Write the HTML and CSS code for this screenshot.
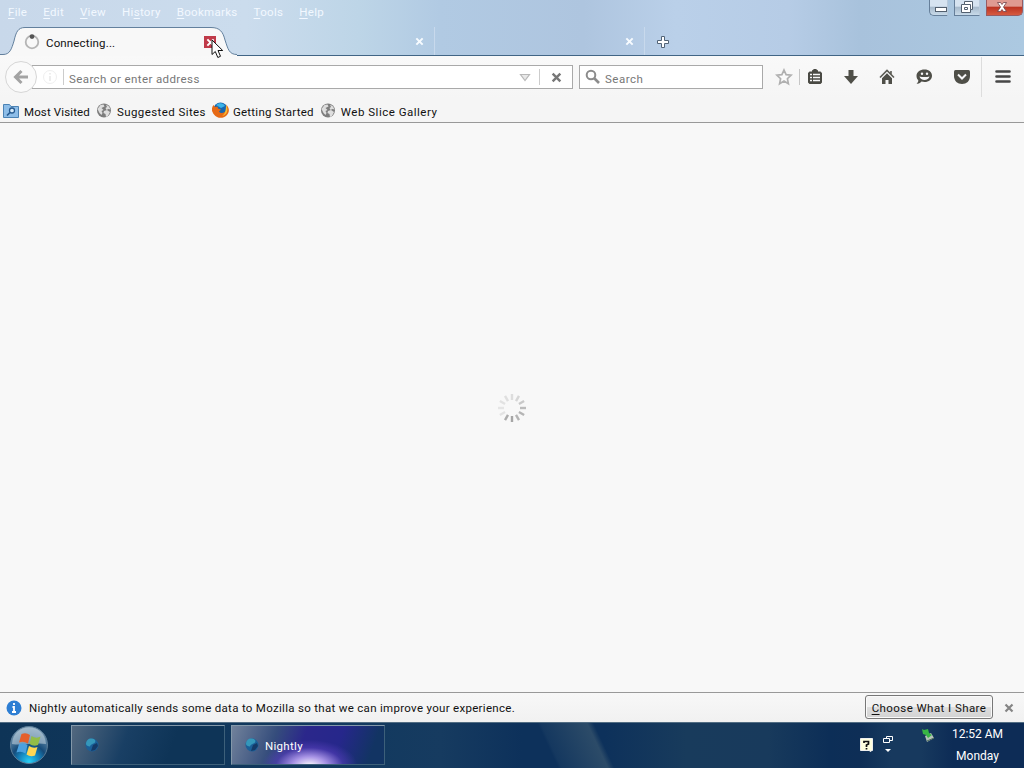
FILE: index.html
```html
<!DOCTYPE html>
<html lang="en">
<head>
    <meta charset="utf-8">
    <title>Nightly</title>
    <link rel="stylesheet" href="styles.css">
</head>
<body>
    <!-- Shared shapes -->
    <svg class="defs" width="0" height="0">
        <defs>
            <symbol id="globe" viewBox="0 0 16 16">
                <circle cx="8" cy="7.500" r="7" fill="#7d7d7d"/>
                <path d="M1.500 6l3-4 3-.5 1 2-3 1.500 2 2-2 1 1 2-1 2-2-2zM10 1.500l3 2 1.500 3-2-.5-2 1-1-2 1.500-1zM8 8l3-1 3 2-2 4-2 1-.5-3-2-1z" fill="#dedede"/>
            </symbol>
            <symbol id="cross" viewBox="0 0 10 10">
                <path d="M1.500 1.500l7 7M8.500 1.500l-7 7" stroke="currentColor" stroke-width="2.200"/>
            </symbol>
            <symbol id="orb" viewBox="0 0 16 16">
                <circle cx="8" cy="8" r="6.500" fill="#1b5f97"/>
                <path d="M2 7c0-4 3-6 6-5.500 3 .5 4 2 3 4-2 2-4 1-5 4-2 0-4-1-4-2.500z" fill="#3597ba"/>
                <path d="M9 8l4-2 1 3-3 4-4 1z" fill="#143a68"/>
            </symbol>
        </defs>
    </svg>

    <div class="titlebar">
        <div class="menubar">
            <span><u>F</u>ile</span>
            <span><u>E</u>dit</span>
            <span><u>V</u>iew</span>
            <span>Hi<u>s</u>tory</span>
            <span><u>B</u>ookmarks</span>
            <span><u>T</u>ools</span>
            <span><u>H</u>elp</span>
        </div>
        <div class="window-buttons">
            <div class="win-btn minimize">
                <svg width="20" height="16" viewBox="0 0 20 16"><rect x="6.500" y="7.500" width="11" height="4" fill="#fff" stroke="#53606f"/></svg>
            </div>
            <div class="win-btn restore">
                <svg width="26" height="16" viewBox="0 0 26 16"><path d="M10.500 1.500h8v8h-2v3h-9v-8h3z" fill="#fff" stroke="#53606f"/><path d="M10.500 4.500h6v5M10.500 7.500h3v2h-3z" fill="none" stroke="#53606f"/></svg>
            </div>
            <div class="win-btn close">
                <svg width="32" height="16" viewBox="0 0 32 16"><path d="M11.500 2.500h3l1.500 2 1.500-2h3l-3 4.500 3 4.500h-3l-1.500-2-1.500 2h-3l3-4.500z" fill="#fff" stroke="#704046" stroke-width=".8"/></svg>
            </div>
        </div>
        <div class="tabs">
            <div class="tab active">
                <svg class="tab-shape" width="237" height="29" viewBox="0 0 237 29">
                    <path d="M0 27.500H3C10 27.500 11.500 22 14 14C16 5 18 .5 25 .5H211C220 .5 223 5 225 13C228 22 229 27.500 237 27.500V29H0z" fill="#f8f8f8"/>
                    <path d="M0 27.500H3C10 27.500 11.500 22 14 14C16 5 18 .5 25 .5H211C220 .5 223 5 225 13C228 22 229 27.500 237 27.500" fill="none" stroke="#63809d"/>
                </svg>
                <svg class="throbber" width="16" height="16" viewBox="0 0 16 16"><circle cx="8" cy="8" r="6.300" fill="none" stroke="#b5b5b5" stroke-width="1.800"/><circle cx="8" cy="2.600" r="2.400" fill="#555"/></svg>
                <span class="tab-label">Connecting...</span>
                <span class="tab-close-hot"><svg width="9" height="9"><use href="#cross"/></svg></span>
            </div>
            <div class="tab second"><svg width="9" height="9"><use href="#cross"/></svg></div>
            <div class="tab third"><svg width="9" height="9"><use href="#cross"/></svg></div>
            <svg class="new-tab" width="14" height="14" viewBox="0 0 14 14"><path d="M5.500 1.500h3v4h4v3h-4v4h-3v-4h-4v-3h4z" fill="#fff" stroke="#526477"/></svg>
        </div>
    </div>

    <div class="navbar">
        <div class="back">
            <svg width="16" height="16" viewBox="0 0 16 16"><path d="M8.500 2L2.500 8l6 6M3 8h12" fill="none" stroke="#a3a3a3" stroke-width="3"/></svg>
        </div>
        <div class="urlbar">
            <svg class="identity" width="16" height="16" viewBox="0 0 16 16"><circle cx="8" cy="8" r="6.500" fill="none" stroke="#efefef"/><path d="M8 4v1.500M8 7v5" stroke="#e8e8e8" stroke-width="1.500"/></svg>
            <span class="url-text">Search or enter address</span>
            <svg class="dropmarker" width="12" height="9" viewBox="0 0 12 9"><path d="M1.500 1.500h9L6 7.500z" fill="#e8e8e8" stroke="#b8b8b8" stroke-width="1.200"/></svg>
            <span class="stop"><svg width="11" height="11"><use href="#cross"/></svg></span>
        </div>
        <div class="searchbar">
            <svg width="16" height="16" viewBox="0 0 16 16"><circle cx="6" cy="6" r="4.300" fill="none" stroke="#8c8c8c" stroke-width="2"/><path d="M9 9l5 5" stroke="#8c8c8c" stroke-width="2.600"/></svg>
            <span>Search</span>
        </div>
        <div class="toolbar">
            <svg class="star" width="18" height="18" viewBox="0 0 18 18"><path d="M9 2l2.100 4.700 5 .5-3.700 3.500 1 5L9 13.100l-4.400 2.600 1-5L1.900 7.200l5-.5z" fill="#fafafa" stroke="#b0b0b0" stroke-width="1.700"/></svg>
            <i class="line"></i>
            <svg width="16" height="16" viewBox="0 0 16 16"><path d="M5 2.500V1.500L7 0h2l2 1.500v1h2.500L15 4v9.500L13.500 15h-11L1 13.500V4l1.500-1.500z" fill="#4a4a44"/><path d="M3 5.500h2M6 5.500h7M3 8.500h2M6 8.500h7M3 11.500h2M6 11.500h7" stroke="#f8f8f8" stroke-width="1.600"/></svg>
            <svg width="16" height="16" viewBox="0 0 16 16"><path d="M5.500 1h5v6H15l-7 8-7-8h4.500z" fill="#4f4f48"/></svg>
            <svg width="16" height="16" viewBox="0 0 16 16"><path d="M1 8.500l7-7 7 7M12 2v4" fill="none" stroke="#5c5c55" stroke-width="1.600"/><path d="M8 4.200l5 5V15H9.500v-4h-3v4H3V9.200z" fill="#4f4f48"/></svg>
            <svg width="18" height="16" viewBox="0 0 18 16"><path d="M9.500 .5c4.500 0 7.500 2.600 7.500 6.200s-3 6.300-7.500 6.300c-1 0-2-.1-3-.4C5.500 14 3.500 15 1.500 14.500 3 13.700 3.500 12.500 3.200 11 2 10 1.500 8.500 1.500 6.700 1.500 3.100 5 .5 9.500.5z" fill="#4f4f48"/><circle cx="7" cy="4.700" r="1.200" fill="#f8f8f8"/><circle cx="12" cy="4.700" r="1.200" fill="#f8f8f8"/><path d="M4.500 7.500c3 .8 7 .8 10 0-.8 4.500-9.200 4.500-10 0z" fill="#f8f8f8"/></svg>
            <svg width="18" height="16" viewBox="0 0 18 16"><path d="M2.500 1h13Q17 1 17 2.500V7c0 5-3.500 8-8 8s-8-3-8-8V2.500Q1 1 2.500 1z" fill="#4f4f48"/><path d="M5 5.500l4 4 4-4" fill="none" stroke="#f8f8f8" stroke-width="2"/></svg>
            <div class="menu-btn"><svg width="18" height="16" viewBox="0 0 18 16"><path d="M2.500 2.500h13M2.500 7.500h13M2.500 12.500h13" stroke="#474747" stroke-width="2.600" stroke-linecap="round"/></svg></div>
        </div>
    </div>

    <div class="bookmarks">
        <svg width="16" height="16" viewBox="0 0 16 16"><path d="M.5 14.500v-13h6l1.500 2h7.500v11z" fill="#8dbde8" stroke="#4b82b4"/><circle cx="9" cy="7.500" r="2.500" fill="#d6ebfb" stroke="#275b91" stroke-width="1.300"/><path d="M7 9.500l-3 3" stroke="#275b91" stroke-width="1.700"/></svg>
        <span class="most">Most Visited</span>
        <svg width="16" height="16"><use href="#globe"/></svg>
        <span class="suggested">Suggested Sites</span>
        <svg width="17" height="17" viewBox="0 0 17 17"><circle cx="8.500" cy="7.500" r="7" fill="#1866ae"/><path d="M4 3c3-3 8-2 9 1L9 6z" fill="#3bb4e8"/><path d="M1.500 3l1.500 2 2.500-.5.5 2 3 1-2 2c2 3 6 1 7-1s1-4 0-6c3.500 3 4 7.500.5 11S5 16.500 2 12.500-.5 6 1.500 3z" fill="#e66a16"/><path d="M14 3c3 5 1 10-4 11 3-2 4-5 4-11z" fill="#f7bd35"/></svg>
        <span class="getting">Getting Started</span>
        <svg width="16" height="16"><use href="#globe"/></svg>
        <span class="gallery">Web Slice Gallery</span>
    </div>

    <div class="content">
        <svg width="30" height="30" viewBox="-15 -15 30 30" stroke-width="2.400">
            <path d="M0-8v-6" stroke="#ddd"/>
            <path d="M0-8v-6" stroke="#d6d6d6" transform="rotate(30)"/>
            <path d="M0-8v-6" stroke="#c9c9c9" transform="rotate(60)"/>
            <path d="M0-8v-6" stroke="#bcbcbc" transform="rotate(90)"/>
            <path d="M0-8v-6" stroke="#b5b5b5" transform="rotate(120)"/>
            <path d="M0-8v-6" stroke="#b5b5b5" transform="rotate(150)"/>
            <path d="M0-8v-6" stroke="#a6a6a6" transform="rotate(180)"/>
            <path d="M0-8v-6" stroke="#acacac" transform="rotate(210)"/>
            <path d="M0-8v-6" stroke="#e3e3e3" transform="rotate(240)"/>
            <path d="M0-8v-6" stroke="#e5e5e5" transform="rotate(270)"/>
            <path d="M0-8v-6" stroke="#e2e2e2" transform="rotate(300)"/>
            <path d="M0-8v-6" stroke="#dfdfdf" transform="rotate(330)"/>
        </svg>
    </div>

    <div class="notification">
        <svg width="16" height="16" viewBox="0 0 16 16"><circle cx="8" cy="8" r="7.500" fill="#2d7ed3"/><path d="M8 3v2M6.500 7H8v5M6 12h4" fill="none" stroke="#fff" stroke-width="1.800"/></svg>
        <span class="message">Nightly automatically sends some data to Mozilla so that we can improve your experience.</span>
        <button class="share-btn"><u>C</u>hoose What I Share</button>
        <svg class="dismiss" width="10" height="10"><use href="#cross"/></svg>
    </div>

    <div class="taskbar">
        <svg class="start" width="40" height="40" viewBox="0 0 40 40">
            <defs>
                <radialGradient id="start-bg" cx=".5" cy=".95" r=".95"><stop offset="0" stop-color="#29d0f5"/><stop offset=".3" stop-color="#1482bb"/><stop offset=".5" stop-color="#164b79"/><stop offset="1" stop-color="#8baac0"/></radialGradient>
            </defs>
            <circle cx="20" cy="20" r="18.500" fill="url(#start-bg)" stroke="#5b7d98"/>
            <path d="M3 19C4-3 36-3 37 19 27 17 14 21 3 19z" fill="#b9cbd8" opacity=".6"/>
            <path d="M12.500 9q4.500-2 8.500 1l-2 8.500q-4.500-3-9-1z" fill="#e45f2c"/>
            <path d="M22.500 11q5 3 9 .5L29 20q-4.500 2-8.500-1z" fill="#93bd47"/>
            <path d="M10 19q4.500-2 8.500 1l-2 8.500q-4.500-3-9-1z" fill="#4ba1e0"/>
            <path d="M20 21q4.500 3 8.500 1L26 30.500q-4.500 2-8.500-1z" fill="#ffd653"/>
        </svg>
        <div class="task"><svg width="16" height="16"><use href="#orb"/></svg></div>
        <div class="task current"><svg width="16" height="16"><use href="#orb"/></svg><span>Nightly</span></div>
        <div class="tray">
            <svg class="help" width="13" height="14" viewBox="0 0 13 14"><path d="M.5.5h12v12H11v1l-2-1H.5z" fill="#ffffdf" stroke="#eee"/><path d="M4 5V3.500h4.500V6L6.500 7v2M6.500 10v1.500" fill="none" stroke="#111" stroke-width="1.700"/></svg>
            <svg class="lang" width="10" height="18" viewBox="0 0 10 18"><path d="M3.500 3.500v-2h6v4h-3M.5 3.500h6v4h-6z" fill="none" stroke="#fff"/><path d="M2 14h6l-3 3z" fill="#fff"/></svg>
            <svg class="device" width="14" height="14" viewBox="0 0 14 14"><path d="M4 8l6-3 3 5-7 4z" fill="#b5c3b7"/><path d="M1 1l2 1 4-1 1 4 3 2-4 3-2-3-3-1z" fill="#38b545"/><path d="M6 13l7-3" stroke="#4e6c5c"/></svg>
            <div class="clock"><span class="time">12:52 AM</span><span class="day">Monday</span></div>
        </div>
    </div>

    <svg class="cursor" width="13" height="20" viewBox="0 0 13 20"><path d="M1 1v14.500l3.300-3 2.500 6 2.700-1.200L7 11.500h4.700z" fill="#fff" stroke="#111"/></svg>
</body>
</html>
```
FILE: styles.css
```css
* {
    box-sizing: border-box;
}
body {
    margin: 0;
    width: 1024px;
    height: 768px;
    overflow: hidden;
    display: flex;
    flex-direction: column;
    background: #f8f8f8;
    color: #111;
    font-family: Roboto, "Liberation Sans", sans-serif;
    font-size: 11.5px;
    line-height: 16px;
    white-space: nowrap;
}
svg {
    display: block;
    flex-shrink: 0;
}
.defs {
    position: absolute;
}
u {
    text-underline-offset: 2px;
}

/* Window frame */
.titlebar {
    position: relative;
    height: 56px;
    flex-shrink: 0;
    display: flex;
    flex-direction: column;
    justify-content: space-between;
    border-bottom: 1px solid #416585;
    background: linear-gradient(90deg, #c8d8ea 0, #cbdced 24%, #bdd5e7 35%, #b1cae3 43%, #aec5df 57%, #bad0e9 66%, #b6cce6 77%, #a8c2dc 84%, #acc9e1 100%);
}
.menubar {
    display: flex;
    gap: 16px;
    padding: 4px 8px;
    color: #f2f8ff;
    letter-spacing: .3px;
}
.window-buttons {
    position: absolute;
    top: 0;
    right: 1px;
    display: flex;
    gap: 6px;
}
.win-btn {
    height: 16px;
    border: 1px solid #667f9a;
    border-top: 0;
    background: linear-gradient(#d6e3f0 40%, #a8bbcd 50%, #c8dae9);
    display: flex;
    justify-content: center;
    overflow: hidden;
}
.minimize {
    width: 19px;
    border-right-color: #b9cadb;
    border-radius: 0 0 0 5px;
}
.restore {
    width: 26px;
    border-right-color: #b9cadb;
}
.close {
    width: 37px;
    padding-right: 5px;
    border-color: #985b61;
    border-top: 0;
    border-radius: 0 0 5px 0;
    background: linear-gradient(#df9a91 40%, #bd3523 50%, #d65a40);
}
.tabs {
    display: flex;
    height: 28px;
    align-items: center;
}
.tab {
    height: 28px;
    display: flex;
    align-items: center;
}
.active {
    position: relative;
    width: 225px;
    padding: 2px 0 0 24px;
    gap: 6px;
}
.tab-shape {
    position: absolute;
    left: 0;
    top: 0;
}
.throbber, .tab-label, .tab-close-hot {
    position: relative;
}
.tab-label {
    flex: 1;
    padding-top: 1px;
    letter-spacing: .15px;
}
.tab-close-hot {
    width: 12px;
    height: 12px;
    margin-right: 9px;
    display: flex;
    align-items: center;
    justify-content: center;
    background: #c03a49;
    color: #fff;
}
.second, .third {
    width: 210px;
    justify-content: flex-end;
    padding: 1px 10px 0 0;
    color: #f7fbff;
    border-right: 1px solid #c8d9ec;
}
.new-tab {
    margin: 2px 0 0 11px;
}

/* Navigation */
.navbar {
    height: 43px;
    flex-shrink: 0;
    display: flex;
    align-items: center;
    padding: 0 0 1px 5px;
    background: linear-gradient(#f9f9f9, #f5f5f5);
}
.back {
    position: relative;
    z-index: 1;
    width: 32px;
    height: 32px;
    border: 1px solid #d6d6d6;
    border-radius: 50%;
    background: #fafafa;
    display: flex;
    align-items: center;
    justify-content: center;
}
.urlbar, .searchbar {
    height: 24px;
    border: 1px solid #a9a9a9;
    background: #fff;
    color: #777;
    display: flex;
    align-items: center;
}
.urlbar {
    width: 541px;
    margin-left: -5px;
    padding-left: 9px;
}
.url-text {
    flex: 1;
    height: 16px;
    margin-left: 5px;
    padding: 2px 0 0 5px;
    border-left: 1px solid #ccc;
    letter-spacing: .4px;
}
.dropmarker {
    margin-right: 8px;
}
.stop {
    width: 33px;
    height: 16px;
    padding: 3px 0 0 11px;
    border-left: 1px solid #ccc;
    color: #777;
}
.searchbar {
    width: 184px;
    margin-left: 6px;
    padding-left: 5px;
    gap: 4px;
    letter-spacing: .5px;
}
.searchbar span {
    padding-top: 3px;
}
.toolbar {
    flex: 1;
    height: 42px;
    padding-left: 12px;
    display: flex;
    align-items: center;
    gap: 20px;
}
.line {
    width: 1px;
    height: 16px;
    margin: 0 -13px 0 -14px;
    background: #c6c6c6;
}
.menu-btn {
    height: 40px;
    margin-left: -10px;
    padding: 12px 0 0 12px;
    border-left: 1px solid #ddd;
}
.bookmarks {
    height: 24px;
    flex-shrink: 0;
    display: flex;
    align-items: center;
    padding: 0 3px;
    border-bottom: 1px solid #999;
    background: #f5f5f5;
}
.bookmarks span {
    margin: 2px 6px 0 5px;
}
.bookmarks .most {
    letter-spacing: .13px;
}
.bookmarks .suggested {
    letter-spacing: .42px;
}
.bookmarks .getting {
    letter-spacing: .24px;
    margin-left: 4px;
}
.bookmarks .gallery {
    letter-spacing: .5px;
}

/* Page */
.content {
    flex: 1;
    display: flex;
    align-items: center;
    justify-content: center;
}
.notification {
    height: 30px;
    flex-shrink: 0;
    display: flex;
    align-items: center;
    padding: 0 10px 0 6px;
    border-top: 1px solid #999;
    background: linear-gradient(#f8f8f8, #f1f1f1);
}
.message {
    flex: 1;
    margin-left: 7px;
    letter-spacing: .305px;
}
.share-btn {
    width: 128px;
    height: 24px;
    margin-bottom: 1px;
    padding: 1px 0 0;
    border: 1px solid #777;
    border-radius: 3px;
    box-shadow: inset 0 0 0 1px #fafafa;
    background: linear-gradient(#f2f2f2 48%, #dedede 52%, #d2d2d2);
    color: #111;
    font: inherit;
    letter-spacing: .43px;
}
.dismiss {
    margin-left: 11px;
    color: #858585;
}

/* Taskbar */
.taskbar {
    height: 46px;
    flex-shrink: 0;
    display: flex;
    align-items: center;
    padding-bottom: 1px;
    border-top: 1px solid #526d83;
    background: linear-gradient(65deg, transparent 506px, #24466855 509px, #2c4b68 551px, transparent 557px), linear-gradient(90deg, #0e3457 0, #12395f 35%, #163b60 43%, #0d315b 51%, #0d315b 59%, #183b5c 67%, #183a5c 75%, #0c2e57 81%, #0e2e56 84%, #17395e 87%, #17395e 90%, #0d2c56 93%);
    color: #fff;
}
.start {
    margin: 0 22px 0 9px;
}
.task {
    width: 154px;
    height: 40px;
    margin-right: 6px;
    padding-left: 12px;
    display: flex;
    align-items: center;
    gap: 5px;
    border: 1px solid #3d607a;
    border-top-color: #8398a9;
    border-left-color: #8398a9;
    background: linear-gradient(110deg, #52687f, #193f64 35%, #0e3457 65%);
}
.current {
    background: radial-gradient(ellipse 48px 26px at 51% 105%, #fff 0, #a995e6 35%, #5942bd88 70%, transparent 100%), linear-gradient(110deg, #71829b, #354d7c 28%, #2b278b 46%, #26278b 68%, #123463 90%);
}
.task span {
    padding-top: 1px;
    letter-spacing: .3px;
}
.tray {
    margin-left: auto;
    height: 44px;
    display: flex;
}
.help {
    margin-top: 15px;
}
.lang {
    margin: 12px 0 0 10px;
}
.device {
    margin: 5px 0 0 28px;
}
.clock {
    width: 89px;
    display: flex;
    flex-direction: column;
    align-items: center;
    gap: 6px;
    padding: 3px 4px 0 0;
    font-size: 12px;
}
.cursor {
    position: absolute;
    left: 211px;
    top: 39px;
}
```
